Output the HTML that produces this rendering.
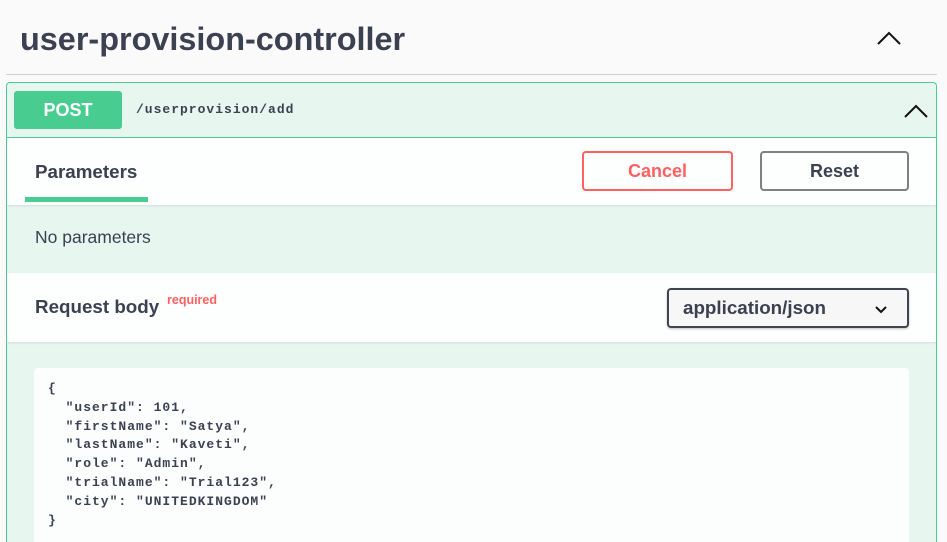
<!DOCTYPE html>
<html style="width:947px;height:542px;overflow:hidden"><head><meta charset="utf-8"><style>
*{box-sizing:border-box;margin:0;padding:0}
body{width:947px;height:542px;overflow:hidden;background:#fafafa;font-family:"Liberation Sans",sans-serif;color:#3b4151;position:relative}
.abs{position:absolute}
h1{position:absolute;left:20px;top:21px;font-size:32.4px;font-weight:bold;color:#3b4151}
.hr{left:6px;top:74px;width:931px;height:1px;background:#d0d0d0}
.op{left:6px;top:82px;width:931px;height:470px;border:1px solid #49cc90;border-bottom:none;border-radius:4px 4px 0 0;background:#e8f6f0;overflow:hidden}
.post{left:7px;top:8px;width:108px;height:38px;background:#49cc90;border-radius:3px;color:#fff;font-weight:bold;font-size:18px;text-align:center;line-height:38px}
.path{left:129px;top:19px;font-family:"Liberation Mono",monospace;font-weight:bold;font-size:13px;letter-spacing:1px;color:#3b4151}
.sec{left:0;width:929px;background:#fdfefe;box-shadow:0 1px 2px rgba(0,0,0,.1)}
.btn{height:40px;border:2px solid;border-radius:4px;font-weight:bold;font-size:18px;text-align:center;line-height:36px;background:transparent}
pre{font-family:"Liberation Mono",monospace;font-weight:bold;font-size:13px;letter-spacing:1px;line-height:18.8px;color:#3b4151}
</style></head><body>
<h1>user-provision-controller</h1>
<svg class="abs" style="left:876px;top:30px" width="26" height="16" viewBox="0 0 26 16"><path d="M2 14 L13 3 L24 14" fill="none" stroke="#111" stroke-width="2"/></svg>
<div class="abs hr"></div>
<div class="abs op">
  <div class="abs post">POST</div>
  <div class="abs path">/userprovision/add</div>
  <svg class="abs" style="left:896px;top:20px" width="26" height="16" viewBox="0 0 26 16"><path d="M2 14 L13 3 L24 14" fill="none" stroke="#111" stroke-width="2"/></svg>
  <div class="abs" style="left:0;top:54px;width:929px;height:1px;background:#49cc90"></div>
  <div class="abs sec" style="top:55px;height:67px">
    <div class="abs" style="left:28px;top:23px;font-size:18.8px;font-weight:bold">Parameters</div>
    <div class="abs" style="left:18px;top:59px;width:123px;height:5px;background:#49cc90"></div>
    <div class="abs btn" style="left:575px;top:13px;width:151px;border-color:#ff6060;color:#ff6060">Cancel</div>
    <div class="abs btn" style="left:753px;top:13px;width:149px;border-color:#808080;color:#3b4151">Reset</div>
  </div>
  <div class="abs" style="left:28px;top:144px;font-size:17.5px">No parameters</div>
  <div class="abs sec" style="top:190px;height:69px">
    <div class="abs" style="left:28px;top:23px;font-size:18.8px;font-weight:bold">Request body</div>
    <div class="abs" style="left:160px;top:20px;font-size:12.5px;font-weight:bold;color:#ff6060">required</div>
    <div class="abs" style="left:660px;top:15px;width:242px;height:40px;border:2px solid #41444e;border-radius:4px;background:#f7f7f7;box-shadow:0 1px 2px rgba(0,0,0,.25)">
      <div class="abs" style="left:14px;top:7px;font-size:18.8px;font-weight:bold">application/json</div>
      <svg class="abs" style="left:205px;top:14px" width="14" height="10" viewBox="0 0 14 10"><path d="M2 3 L7 8 L12 3" fill="none" stroke="#111" stroke-width="2"/></svg>
    </div>
  </div>
  <div class="abs" style="left:27px;top:285px;width:875px;height:200px;background:#fcfdfd;border-radius:4px">
    <pre class="abs" style="left:14px;top:12px">{
  "userId": 101,
  "firstName": "Satya",
  "lastName": "Kaveti",
  "role": "Admin",
  "trialName": "Trial123",
  "city": "UNITEDKINGDOM"
}</pre>
  </div>
</div>
</body></html>
